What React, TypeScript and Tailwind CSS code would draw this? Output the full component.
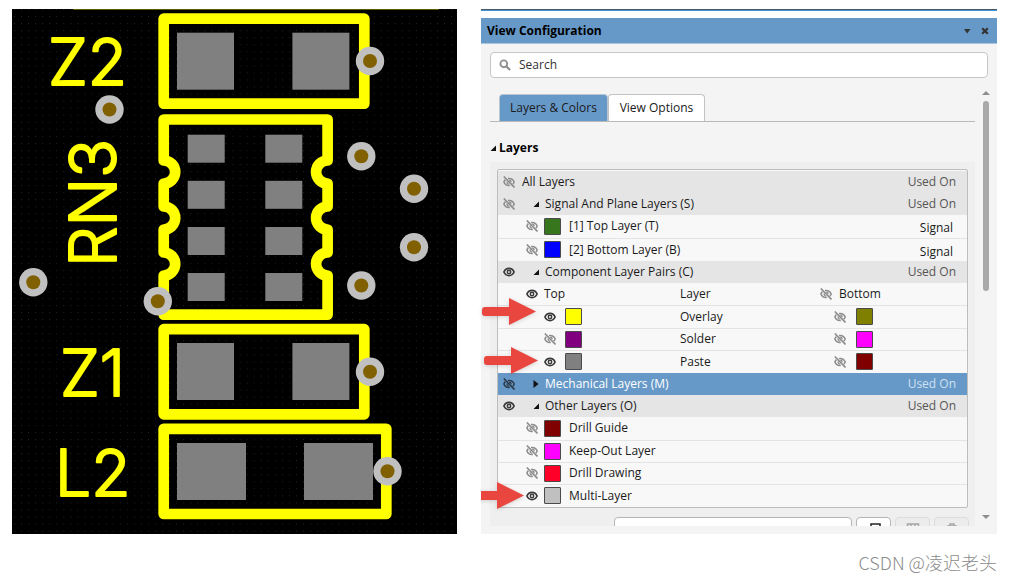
import type { ReactNode } from 'react'

// --- Board data ---

const OUTLINES = [
  'M163.7 18.7H364.3V103.6H163.7Z',
  'M163.7 119.5H327.6V160.5A11.5 11.5 0 0 0 327.6 183.5V206.5A11.5 11.5 0 0 0 327.6 229.5V252.5A11.5 11.5 0 0 0 327.6 275.5V314.6H163.7V275.5A11.5 11.5 0 0 0 163.7 252.5V229.5A11.5 11.5 0 0 0 163.7 206.5V183.5A11.5 11.5 0 0 0 163.7 160.5Z',
  'M163.7 329.2H364.3V414.3H163.7Z',
  'M163.7 428.8H386.3V514H163.7Z',
]

const PADS = [
  { x: 177, y: 32.7, w: 57, h: 57 },
  { x: 292.4, y: 32.7, w: 57, h: 57 },
  { x: 187.7, y: 134.7, w: 37, h: 28 },
  { x: 265.3, y: 134.7, w: 37, h: 28 },
  { x: 187.7, y: 180.8, w: 37, h: 28 },
  { x: 265.3, y: 180.8, w: 37, h: 28 },
  { x: 187.7, y: 227, w: 37, h: 28 },
  { x: 265.3, y: 227, w: 37, h: 28 },
  { x: 187.7, y: 273, w: 37, h: 28 },
  { x: 265.3, y: 273, w: 37, h: 28 },
  { x: 177, y: 343, w: 57, h: 57 },
  { x: 292.4, y: 343, w: 57, h: 57 },
  { x: 177, y: 443, w: 69, h: 57 },
  { x: 304, y: 443, w: 69, h: 57 },
]

const VIAS = [
  [370, 61], [109.5, 109.5], [361.3, 156.3], [414, 188.7], [414, 247.3],
  [361.3, 285.5], [33.3, 282.3], [157.8, 301.3], [370, 371.7], [387.5, 471.3],
]

function Board() {
  return (
    <svg viewBox="12 9 445 525" className="block h-auto w-full" role="img" aria-label="PCB layout">
      <defs>
        <pattern id="grid" x="14" y="16" width="7.05" height="7.05" patternUnits="userSpaceOnUse">
          <rect width="1" height="1" fill="#242424" />
        </pattern>
      </defs>
      <rect x="12" y="9" width="445" height="525" fill="#000" />
      <rect x="12" y="9" width="445" height="525" fill="url(#grid)" />
      <rect x="73" y="9" width="366" height="1" fill="#5c5c00" />
      {PADS.map((p, i) => (
        <rect key={i} x={p.x} y={p.y} width={p.w} height={p.h} fill="#808080" />
      ))}
      <g fill="none" stroke="#ff0" strokeWidth="10.7" strokeLinejoin="round">
        {OUTLINES.map((d) => <path key={d} d={d} />)}
      </g>
      <g
        className="font-['Inter',sans-serif] font-light"
        fontSize="64"
        fill="#ff0"
        stroke="#ff0"
        strokeWidth="2"
        strokeLinejoin="round"
      >
        <text x="48" y="85">Z2</text>
        <text transform="translate(116 267) rotate(-90)">RN3</text>
        <text x="60" y="396">Z1</text>
        <text x="55" y="496">L2</text>
      </g>
      {VIAS.map(([x, y]) => (
        <g key={`${x}-${y}`}>
          <circle cx={x} cy={y} r="14.2" fill="#c0c0c0" />
          <circle cx={x} cy={y} r="7" fill="#806000" />
        </g>
      ))}
    </svg>
  )
}

// --- Icons ---

function Eye({ on, name, dark }: { on?: boolean; name: string; dark?: boolean }) {
  return (
    <button type="button" aria-label={`Toggle ${name}`} className="block h-3 w-3 shrink-0">
      {on ? (
        <svg viewBox="0 0 12 12" className="h-3 w-3" fill="none" stroke="#3a3a3a">
          <path d="M.9 6C3 1.200 9 1.200 11.100 6 9 10.800 3 10.800.9 6Z" strokeWidth="1.700" />
          <circle cx="6" cy="6" r="1.700" strokeWidth="1.500" />
        </svg>
      ) : (
        <svg viewBox="0 0 12 12" className="h-3 w-3" fill="none" stroke={dark ? '#2b3a48' : '#8c8c8c'}>
          <path d="M2.400 3.600C1.700 4.200 1.200 5 .9 6c1 2.500 3.200 3.800 5.900 3.500M5 2.600c3-.4 5.200.9 6.200 3.400-.3.900-.8 1.600-1.400 2.100" strokeWidth="1.500" />
          <path d="M4.200 5.400c-.4 1.500.5 2.700 2 2.700M6.200 4.100c1.200.1 2 1 1.900 2.200" strokeWidth="1.300" />
          <path d="M.8.500 11.500 11.500" strokeWidth="1.600" />
        </svg>
      )}
    </button>
  )
}

function Fold({ open }: { open: boolean }) {
  return (
    <svg viewBox="0 0 6 8" className="h-2 w-[6px] shrink-0">
      <path d={open ? 'M6 1.500V7H.5Z' : 'M.5 0 5.500 4 .5 8Z'} fill="#111" />
    </svg>
  )
}

function Arrow({ className }: { className: string }) {
  return (
    <svg viewBox="0 0 56 32" className={`pointer-events-none absolute h-8 w-14 drop-shadow-sm ${className}`}>
      <path d="M4 11H28V2L55 15.500 28 29V20H4Q1 20 1 17V14Q1 11 4 11Z" fill="#e8463f" />
    </svg>
  )
}

function Swatch({ className }: { className: string }) {
  return <span className={`block h-[17px] w-[17px] shrink-0 rounded-[1px] border border-[#4a4a4a] ${className}`} />
}

// --- Layer rows ---

function GroupRow({ name, on, open = true, selected }: { name: string; on?: boolean; open?: boolean; selected?: boolean }) {
  return (
    <tr className={selected ? 'h-[22px] bg-[#6799c8] text-white' : 'h-[22px] bg-[#e5e5e5]'}>
      <th colSpan={3} scope="rowgroup" className="font-normal">
        <div className="flex items-center pl-[5px]">
          <Eye on={on} name={name} dark={selected} />
          <span className="flex w-[30px] justify-end pr-[6px]"><Fold open={open} /></span>
          {name}
        </div>
      </th>
      <td className={selected ? 'pr-[11px] text-right text-[#cfe0f0]' : 'pr-[11px] text-right text-[#555]'}>Used On</td>
    </tr>
  )
}

const leafRow = 'h-[22px] border-t border-[#e4e4e4] first:h-[23px] first:border-t-0 last:h-[23px]'

function LeafRow({ name, color, on, note }: { name: string; color: string; on?: boolean; note?: string }) {
  return (
    <tr className={leafRow}>
      <th colSpan={3} scope="row" className="font-normal">
        <div className="flex items-center gap-[6px] pl-7">
          <Eye on={on} name={name} />
          <Swatch className={color} />
          <span className="pl-[2px]">{name}</span>
        </div>
      </th>
      <td className="pt-1 pr-[14px] text-right">{note}</td>
    </tr>
  )
}

function PairRow({ name, top, bottom, on }: { name: string; top: string; bottom: string; on?: boolean }) {
  return (
    <tr className={leafRow}>
      <td>
        <div className="flex items-center gap-[9px] pl-[46px]">
          <Eye on={on} name={`${name} top`} />
          <Swatch className={top} />
        </div>
      </td>
      <th scope="row" className="font-normal">{name}</th>
      <td colSpan={2}>
        <div className="flex items-center gap-[10px] pl-[14px]">
          <Eye name={`${name} bottom`} />
          <Swatch className={bottom} />
        </div>
      </td>
    </tr>
  )
}

function LayerTable() {
  return (
    <div className="rounded-xs border border-[#bdbdbd] bg-[#f8f8f8] pt-px">
      <table className="w-full table-fixed border-collapse text-left leading-4">
        <colgroup>
          <col className="w-[182px]" />
          <col className="w-[140px]" />
          <col />
          <col className="w-[76px]" />
        </colgroup>
        <tbody>
          <tr className="h-[22px] bg-[#e5e5e5]">
            <th colSpan={3} scope="col" className="font-normal">
              <div className="flex items-center gap-[7px] pl-[5px]">
                <Eye name="All Layers" />
                All Layers
              </div>
            </th>
            <td className="pr-[11px] text-right text-[#555]">Used On</td>
          </tr>
          <GroupRow name="Signal And Plane Layers (S)" />
        </tbody>
        <tbody>
          <LeafRow name="[1] Top Layer (T)" color="bg-[#38761d]" note="Signal" />
          <LeafRow name="[2] Bottom Layer (B)" color="bg-[#0000ff]" note="Signal" />
        </tbody>
        <tbody>
          <GroupRow name="Component Layer Pairs (C)" on />
          <tr className="h-[22px] border-b border-[#e4e4e4]">
            <th scope="col" className="font-normal">
              <div className="flex items-center gap-[6px] pl-7">
                <Eye on name="Top" />
                Top
              </div>
            </th>
            <th scope="col" className="font-normal">Layer</th>
            <th scope="col" colSpan={2} className="font-normal">
              <div className="flex items-center gap-[7px]">
                <Eye name="Bottom" />
                Bottom
              </div>
            </th>
          </tr>
        </tbody>
        <tbody>
          <PairRow name="Overlay" top="bg-[#ffff00]" bottom="bg-[#808000]" on />
          <PairRow name="Solder" top="bg-[#800080]" bottom="bg-[#ff00ff]" />
          <PairRow name="Paste" top="bg-[#808080]" bottom="bg-[#800000]" on />
        </tbody>
        <tbody>
          <GroupRow name="Mechanical Layers (M)" open={false} selected />
          <GroupRow name="Other Layers (O)" on />
        </tbody>
        <tbody>
          <LeafRow name="Drill Guide" color="bg-[#800000]" />
          <LeafRow name="Keep-Out Layer" color="bg-[#ff00ff]" />
          <LeafRow name="Drill Drawing" color="bg-[#ff0028]" />
          <LeafRow name="Multi-Layer" color="bg-[#c0c0c0]" on />
        </tbody>
      </table>
    </div>
  )
}

// --- Panel ---

function ToolButton({ label, active, children }: { label: string; active?: boolean; children: ReactNode }) {
  return (
    <button
      type="button"
      aria-label={label}
      className={`flex h-6 w-[35px] shrink-0 justify-center rounded-sm border pt-[5px] ${active ? 'border-[#b5b5b5] bg-white text-[#222]' : 'border-[#dcdcdc] bg-[#ececec] text-[#a5a5a5]'}`}
    >
      <svg viewBox="0 0 14 12" className="h-3 w-[14px]" fill="none" stroke="currentColor" strokeWidth="1.5">
        {children}
      </svg>
    </button>
  )
}

function ViewPanel() {
  return (
    <section aria-label="View Configuration" className="relative flex flex-col bg-[#f4f4f4] text-[#1a1a1a]">
      <div className="border-t border-[#4d5a66] bg-white pb-[7px]">
        <div className="h-px bg-[#3c93dc]" />
      </div>
      <header className="flex h-[26px] items-center border-b border-[#a9c5e0] bg-[#6799c8] px-[6px] text-black">
        <h1 className="flex-1 font-bold">View Configuration</h1>
        <button type="button" aria-label="Panel menu" className="mr-[10px]">
          <svg viewBox="0 0 8 8" className="h-2 w-2"><path d="M1 2H7.500L4.200 6.500Z" fill="#333" /></svg>
        </button>
        <button type="button" aria-label="Close" className="mr-[2px]">
          <svg viewBox="0 0 8 8" className="h-2 w-2"><path d="M1.200 1.200 6.800 6.800M6.800 1.200 1.200 6.800" stroke="#333" strokeWidth="2.200" /></svg>
        </button>
      </header>

      <div className="px-[9px] pt-2">
        <label className="flex h-[26px] items-center gap-2 rounded-sm border border-[#c6c6c6] bg-white px-2">
          <svg viewBox="0 0 13 13" className="h-3 w-3" fill="none" stroke="#8f8f8f">
            <circle cx="5.200" cy="5.200" r="3.700" strokeWidth="2" />
            <path d="m8 8 4 4" strokeWidth="2.400" />
          </svg>
          <input type="text" aria-label="Search" placeholder="Search" className="min-w-0 flex-1 outline-none placeholder:text-[#333]" />
        </label>
      </div>

      <div className="flex flex-1 pb-2 pl-[9px]">
        <div className="flex min-w-0 flex-1 flex-col pt-4">
          <div role="tablist" className="flex border-b border-[#b9b9b9] pl-[9px]">
            <button type="button" role="tab" aria-selected="true" className="h-[27px] w-[109px] rounded-t border border-b-0 border-[#b9c6d2] bg-[#6799c8]">
              Layers &amp; Colors
            </button>
            <button type="button" role="tab" aria-selected="false" className="h-[27px] w-[97px] rounded-t border border-b-0 border-[#c2c2c2] bg-white">
              View Options
            </button>
          </div>
          <h2 className="flex h-10 items-center gap-[3px] pt-3 font-bold text-black">
            <Fold open />
            Layers
          </h2>
          <div className="flex-1 bg-[#efefef] px-[7px] pt-[7px]">
            <LayerTable />
            <div className="-mr-px mt-[9px] flex h-[9px] gap-1 overflow-hidden pl-[117px]">
              <input type="text" aria-label="Layer set name" className="h-6 min-w-0 flex-1 rounded-sm border border-[#b5b5b5] bg-white px-1" />
              <ToolButton label="Load layer set" active>
                <path d="M4 12V1H13V12M4 4 1 7H4" />
              </ToolButton>
              <ToolButton label="Save layer set">
                <path d="M1.500 1H12.500V11H1.500ZM5 1V5M9 1V5" />
              </ToolButton>
              <ToolButton label="Delete layer set">
                <path d="M2 3H12M5 3V1H9V3M3.500 4V12H10.500V4" />
              </ToolButton>
            </div>
          </div>
        </div>
        <div className="flex w-[22px] flex-col items-center pt-[13px] pb-[7px]">
          <svg viewBox="0 0 8 4" className="h-1 w-2"><path d="M0 4 4 0 8 4Z" fill="#8d8d8d" /></svg>
          <div className="flex w-[6px] flex-1 flex-col pt-[6px]">
            <div className="h-[46%] rounded-full bg-[#a9a9a9]" />
          </div>
          <svg viewBox="0 0 8 4" className="h-1 w-2"><path d="M0 0H8L4 4Z" fill="#8d8d8d" /></svg>
        </div>
      </div>

      {/* Callouts on the visible layers */}
      <Arrow className="top-[287px] left-0" />
      <Arrow className="top-[336px] left-[2px]" />
      <div className="pointer-events-none absolute top-[471px] left-0 h-8 w-11 overflow-hidden">
        <Arrow className="top-0 right-0" />
      </div>
    </section>
  )
}

export default function App() {
  return (
    <div className="bg-white pt-[9px] pr-[15px] pb-2 pl-3 font-['Open_Sans',sans-serif] text-[12px] leading-4">
      <main className="grid grid-cols-[445fr_516fr] gap-6">
        <Board />
        <ViewPanel />
      </main>
      <footer className="mt-4 text-right font-['Noto_Sans_CJK_SC',sans-serif] text-[18px] leading-6 font-light text-[#8c8c8c]">
        CSDN @凌迟老头
      </footer>
    </div>
  )
}
